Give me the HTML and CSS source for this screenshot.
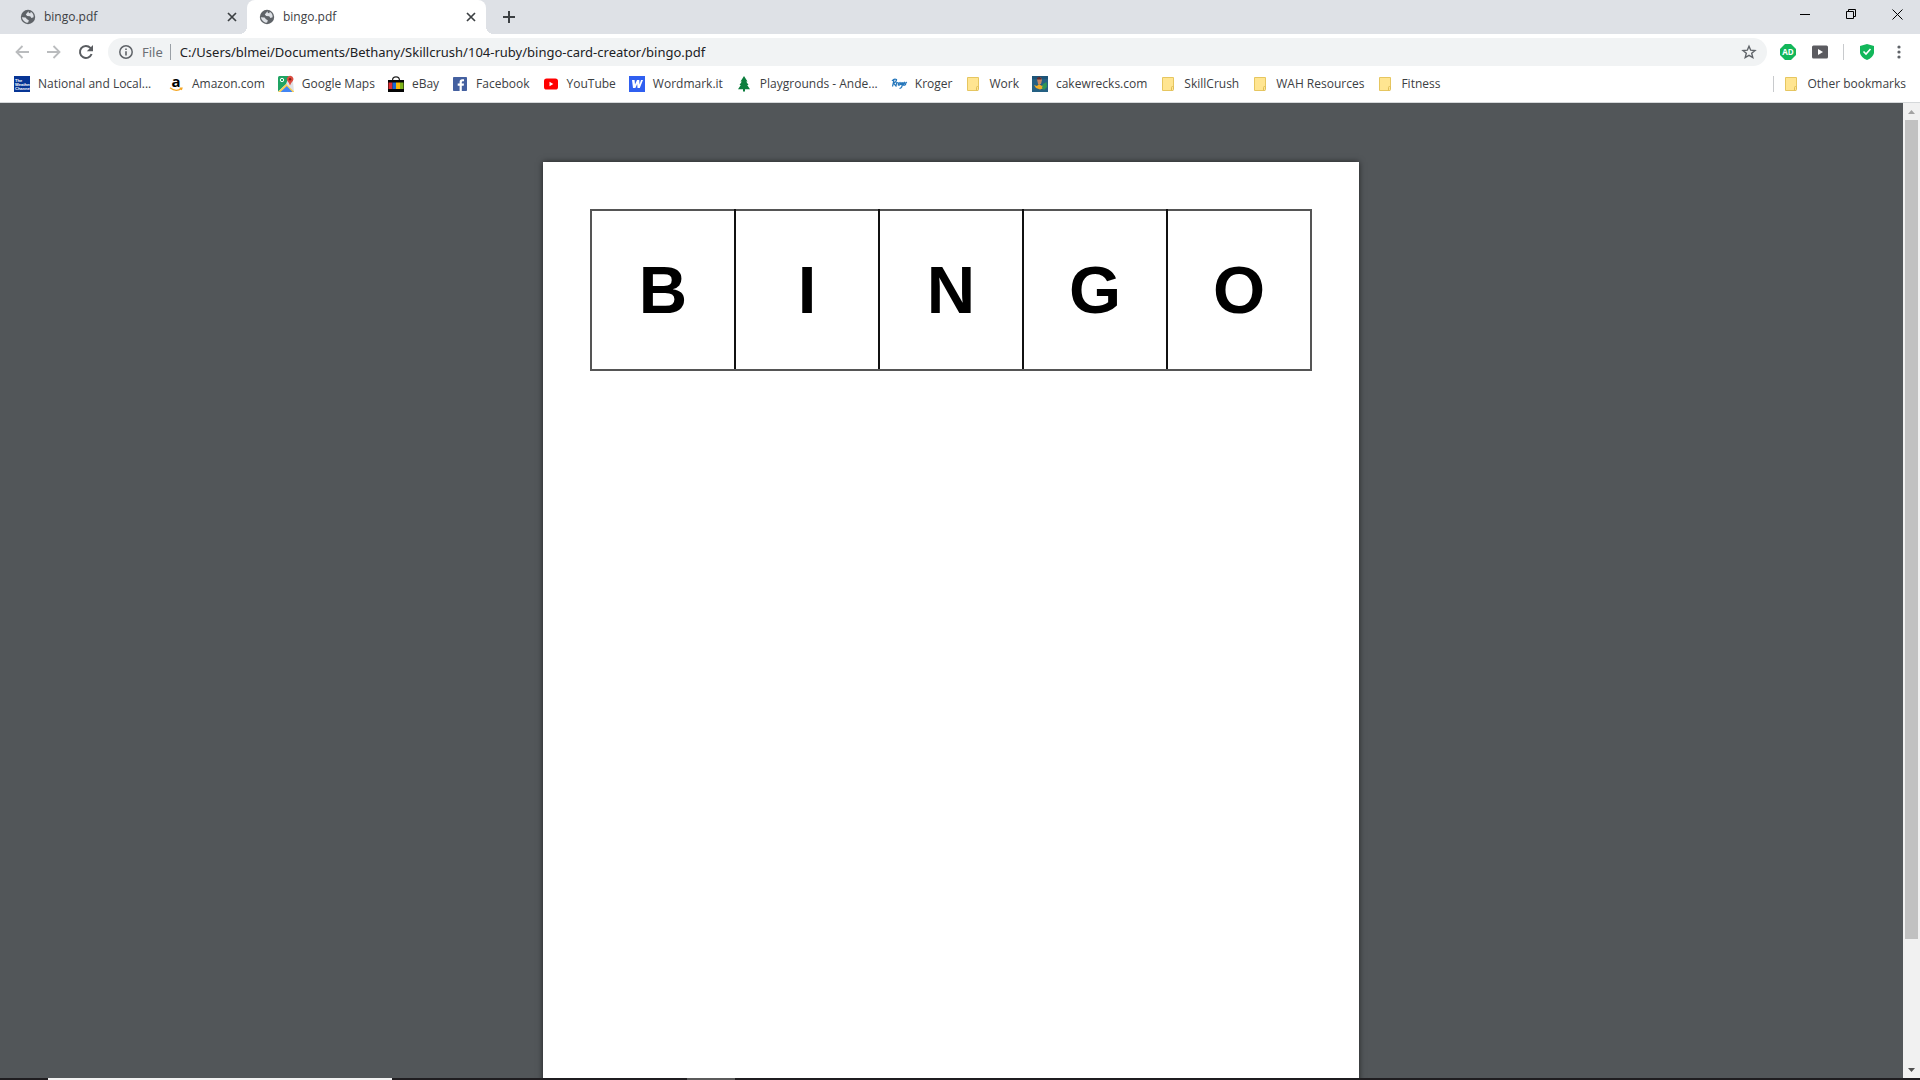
FILE: index.html
```html
<!DOCTYPE html>
<html lang="en">
<head>
<meta charset="utf-8">
<title>bingo.pdf</title>
<link rel="stylesheet" href="styles.css">
</head>
<body>
<svg class="defs" aria-hidden="true">
  <symbol id="globe" viewBox="0 0 16 16"><circle cx="8" cy="8" r="7.2" fill="#5f6368"/><path d="M1.8 8.2 5.6 8.6 7 10.2 8.8 11.2 8.2 13.4 6.8 13.8Q3 12.600 1.800 8.200M8.600 2.200 7 4 5.800 5.400 7.200 7 10.200 7.200 11.400 9 13.600 8.200Q13.900 4.600 10.700 2.800L10.400 4.200 8.800 4.100Z" fill="#dee1e6"/></symbol>
  <symbol id="cross" viewBox="0 0 10 10"><path d="M1 1 9 9M9 1 1 9" fill="none" stroke="#3c4043" stroke-width="1.700"/></symbol>
  <symbol id="folder" viewBox="0 0 16 16"><path d="M2.500 1.500H13.500V11.500H12.500V14.500H2.500Z" fill="#ffe591" stroke="#e6c660"/><path d="M11.500 14.500V11.500Q11.500 10.500 12.500 10.500H13.500V13.500Q13.500 14.500 12.500 14.500Z" fill="#ffe591" stroke="#e0bf58"/></symbol>
</svg>

<header class="browser">
  <div class="tabstrip">
    <div class="tab">
      <svg class="icon"><use href="#globe"/></svg>
      <span class="tab-title">bingo.pdf</span>
      <button class="close" aria-label="Close tab"><svg width="10" height="10"><use href="#cross"/></svg></button>
    </div>
    <div class="tab active">
      <svg class="icon"><use href="#globe"/></svg>
      <span class="tab-title">bingo.pdf</span>
      <button class="close" aria-label="Close tab"><svg width="10" height="10"><use href="#cross"/></svg></button>
    </div>
    <button class="new-tab" aria-label="New tab"><svg width="12" height="12" viewBox="0 0 12 12"><path d="M6 0V12M0 6H12" stroke="#3c4043" stroke-width="2"/></svg></button>
    <div class="window-controls">
      <button aria-label="Minimize"><svg width="10" height="11" viewBox="0 0 10 11"><path d="M0 5.500H10" stroke="#000"/></svg></button>
      <button aria-label="Restore"><svg width="10" height="10" viewBox="0 0 10 10"><path d="M.5 2.500H7.500V9.500H.5ZM2.500 2.500V.5H9.500V7.500H7.500" fill="none" stroke="#000"/></svg></button>
      <button aria-label="Close"><svg width="11" height="11" viewBox="0 0 11 11"><path d="M.5.5 10.500 10.500M10.500.5.5 10.500" stroke="#000"/></svg></button>
    </div>
  </div>

  <div class="toolbar">
    <button class="nav" aria-label="Back"><svg width="14" height="14" viewBox="0 0 14 14"><path d="M14 7H1.500M7.500 1 1.500 7 7.500 13" fill="none" stroke="#babcbe" stroke-width="1.800"/></svg></button>
    <button class="nav" aria-label="Forward"><svg width="14" height="14" viewBox="0 0 14 14"><path d="M0 7H12.500M6.500 1 12.500 7 6.500 13" fill="none" stroke="#babcbe" stroke-width="1.800"/></svg></button>
    <button class="nav" aria-label="Reload"><svg width="14" height="14" viewBox="0 0 14 14"><path d="M12.600 9A6 6 0 1 1 11.400 2.900L12.500 4" fill="none" stroke="#5a5d61" stroke-width="2"/><path d="M14 0V6.200H7.800Z" fill="#5a5d61"/></svg></button>
    <div class="omnibox">
      <svg width="14" height="14" viewBox="0 0 14 14"><circle cx="7" cy="7" r="6.200" fill="none" stroke="#5f6368" stroke-width="1.500"/><path d="M7 6.200V10.400M7 3.500V5" stroke="#5f6368" stroke-width="1.600"/></svg>
      <label class="scheme" for="address">File</label>
      <input id="address" type="text" value="C:/Users/blmei/Documents/Bethany/Skillcrush/104-ruby/bingo-card-creator/bingo.pdf">
      <button class="star" aria-label="Bookmark this page"><svg width="14" height="14" viewBox="0 0 14 14"><path d="M7 1.200 8.700 5.200 13 5.500 9.700 8.300 10.800 12.600 7 10.300 3.200 12.600 4.300 8.300 1 5.500 5.300 5.200Z" fill="none" stroke="#5f6368" stroke-width="1.400"/></svg></button>
    </div>
    <div class="extensions">
      <button aria-label="Ad blocker"><svg width="16" height="16" viewBox="0 0 16 16"><path d="M5 0H11L16 5V11L11 16H5L0 11V5Z" fill="#12b75a"/><text x="8" y="11" text-anchor="middle" class="ad-text">AD</text></svg></button>
      <button aria-label="Video extension"><svg width="16" height="14" viewBox="0 0 16 14"><rect width="16" height="13" y=".5" rx="1.500" fill="#5b5b60"/><path d="M6 4 11 7 6 10Z" fill="#fff"/></svg></button>
      <span class="divider"></span>
      <button aria-label="Security extension"><svg width="16" height="16" viewBox="0 0 16 16"><path d="M8 0 15 2V9Q14 13.500 8 16 2 13.500 1 9V2Z" fill="#12b75a"/><path d="M4.500 7.500 7 10 11.500 5" fill="none" stroke="#fff" stroke-width="1.600"/></svg></button>
      <button aria-label="Menu"><svg width="4" height="14" viewBox="0 0 4 14"><g fill="#5f6368"><circle cx="2" cy="2" r="1.600"/><circle cx="2" cy="7" r="1.600"/><circle cx="2" cy="12" r="1.600"/></g></svg></button>
    </div>
  </div>

  <nav class="bookmarks" aria-label="Bookmarks">
    <a class="truncated" href="#"><svg class="icon" viewBox="0 0 16 16"><rect width="16" height="16" fill="#073595"/><g class="weather-text"><text x="1" y="6">The</text><text x="1" y="10">Weather</text><text x="1" y="14">Channel</text></g></svg>National and Local...</a>
    <a href="#"><svg class="icon" viewBox="0 0 16 16"><text x="8" y="11" text-anchor="middle" class="amazon-text">a</text><path d="M2 11.800Q8 16.500 13.500 12.400M11.500 12H14L13.300 14" fill="none" stroke="#f5a623" stroke-width="1.200"/></svg>Amazon.com</a>
    <a href="#"><svg class="icon" viewBox="0 0 16 16"><path d="M1.500 0H14.500L16 16H0V1.500Z" fill="#dfe1e5"/><path d="M1.500 0H11L8 8 0 15.500V1.500Q0 0 1.500 0" fill="#1fa463"/><path d="M0 16 8.300 8 16 15.500V16H0" fill="#ffd04c"/><path d="M2.500 16 8.800 10 14.500 16Z" fill="#4285f4"/><circle cx="4" cy="4" r="1.700" fill="none" stroke="#fff"/><path d="M12 9.500Q11 6.500 9.500 5A3.200 3.200 0 1 1 14.800 5Q13 6.500 12 9.500" fill="#dd4b3e"/><circle cx="12" cy="3.200" r="1.200" fill="#7d211a"/></svg>Google Maps</a>
    <a href="#"><svg class="icon" viewBox="0 0 16 16"><path d="M4.500 4.500Q4.500.8 8 .8T11.500 4.500" fill="none" stroke="#222" stroke-width="1.200"/><path d="M0 4H16V16H0Z" fill="#050505"/><path d="M.5 6.500H4.500V13H.5Z" fill="#e32d32"/><path d="M4.500 6.500H8V13H4.500Z" fill="#1767d2"/><path d="M8 6.500H12V13H8Z" fill="#f8b90b"/><path d="M12 6.500H15.500V13H12Z" fill="#7fb51b"/></svg>eBay</a>
    <a href="#"><svg class="icon" viewBox="0 0 16 16"><rect x="1" y="1" width="14" height="14" rx=".8" fill="#4460a0"/><path d="M9.800 15V9.700H11.700L12 7.500H9.800V6.200Q9.800 5.200 10.800 5.200H12V3.200H10.200Q7.600 3.200 7.600 5.900V7.500H5.700V9.700H7.600V15Z" fill="#fff"/></svg>Facebook</a>
    <a href="#"><svg class="icon" viewBox="0 0 16 16"><rect x="1" y="2.500" width="14" height="11" rx="2.600" fill="#f00"/><path d="M6.500 5.800 10.300 8 6.500 10.200Z" fill="#fff"/></svg>YouTube</a>
    <a href="#"><svg class="icon" viewBox="0 0 16 16"><rect width="16" height="16" fill="#2f5ff0"/><path d="M3 4H5.600L6 8.500 8 4H10.300L10.500 8.500 12 4H14L10.800 12H8.500L8.200 8 6.400 12H4Z" fill="#fff"/></svg>Wordmark.it</a>
    <a href="#"><svg class="icon" viewBox="0 0 16 16"><path d="M8 0 11.500 5.500H10.200L12.500 9H11.200L14 13.200H9V15.500H7V13.200H2L4.800 9H3.500L5.800 5.500H4.500Z" fill="#0b7d3d"/></svg>Playgrounds - Ande...</a>
    <a href="#"><svg class="icon" viewBox="0 0 16 16"><g fill="none" stroke="#2476bb" stroke-width="1.200"><path d="M1.500 10.500 3 4M1 5Q3 2.300 5.500 3.500 5.500 6 2.500 7.300L5.500 10.500M5 9.500 5.800 6.500 7.500 7M9 6.500Q7 7 7.300 9 8.600 9.700 9 8T9 6.500M11.700 6.500Q9.800 6.500 10 8.500 11.500 9 11.700 6.500 11.500 12 8.500 12.500M12.300 8.200Q14 7.500 13.300 6.300 11.800 7 12.500 9.200 13.500 9.500 14.500 8.500L15 6.500 16 6.200"/></g></svg>Kroger</a>
    <a href="#"><svg class="icon"><use href="#folder"/></svg>Work</a>
    <a href="#"><svg class="icon" viewBox="0 0 16 16"><rect width="16" height="16" fill="#246083"/><path d="M0 0H16V3H0Z" fill="#1d5478"/><path d="M5 3 6 1.500H9L10 4 9 8H6Z" fill="#c98561"/><path d="M5 2 7 .8 9.500 2V3.500H5Z" fill="#592e34"/><path d="M2 9 5 10 7 8 10 10 13 8 12 12 8 13.500 4 12Z" fill="#f0ac27"/><path d="M11 8 14.500 6 15 11 12 14 10 12Z" fill="#309555"/></svg>cakewrecks.com</a>
    <a href="#"><svg class="icon"><use href="#folder"/></svg>SkillCrush</a>
    <a href="#"><svg class="icon"><use href="#folder"/></svg>WAH Resources</a>
    <a href="#"><svg class="icon"><use href="#folder"/></svg>Fitness</a>
    <span class="divider push"></span>
    <a class="other" href="#"><svg class="icon"><use href="#folder"/></svg>Other bookmarks</a>
  </nav>
</header>

<div class="viewer">
  <main class="document">
    <article class="sheet">
      <table class="bingo"><thead><tr><th scope="col">B</th><th scope="col">I</th><th scope="col">N</th><th scope="col">G</th><th scope="col">O</th></tr></thead></table>
    </article>
  </main>
  <div class="scrollbar">
    <button aria-label="Scroll up"><svg width="7" height="4" viewBox="0 0 7 4"><path d="M3.500 0 7 4H0Z" fill="#a3a3a3"/></svg></button>
    <div class="track"><div class="thumb"></div></div>
    <button aria-label="Scroll down"><svg width="7" height="4" viewBox="0 0 7 4"><path d="M0 0H7L3.500 4Z" fill="#505050"/></svg></button>
  </div>
</div>
<footer class="taskbar"><span class="task-search"></span><span class="task-app"></span></footer>
</body>
</html>
```
FILE: styles.css
```css
* { box-sizing: border-box; }

body {
  margin: 0;
  height: 100vh;
  display: flex;
  flex-direction: column;
  overflow: hidden;
  background: #fff;
  color: #3c4043;
  font: 12px/16px "Open Sans", "Noto Sans", sans-serif;
}

button {
  display: flex;
  align-items: center;
  justify-content: center;
  padding: 0;
  border: 0;
  background: none;
  font: inherit;
}

a { color: inherit; text-decoration: none; }
svg { display: block; flex: none; overflow: visible; }
.defs { width: 0; height: 0; position: absolute; }
.icon { width: 16px; height: 16px; }
.divider { width: 1px; height: 16px; background: #c8cacd; }

.browser { flex: none; border-bottom: 1px solid #d5d8da; }

.tabstrip {
  display: flex;
  height: 34px;
  padding-left: 8px;
  background: #dee1e6;
}
.tab {
  display: flex;
  align-items: center;
  gap: 8px;
  width: 239px;
  padding: 0 9px 0 12px;
}
.tab .tab-title { flex: 1; }
.active { position: relative; background: #fff; border-radius: 8px 8px 0 0; }
.active::before,
.active::after {
  content: "";
  position: absolute;
  bottom: 0;
  width: 8px;
  height: 8px;
}
.active::before { right: 100%; background: radial-gradient(circle at 0 0, #dee1e6 8px, #fff 8px); }
.active::after { left: 100%; background: radial-gradient(circle at 100% 0, #dee1e6 8px, #fff 8px); }
.close { width: 12px; height: 16px; }
.new-tab { width: 28px; margin-left: 9px; }
.window-controls { display: flex; height: 28px; margin-left: auto; }
.window-controls button { width: 46px; }

.toolbar {
  display: flex;
  align-items: center;
  height: 36px;
  padding: 0 12px 0 6px;
}
.nav { width: 32px; height: 28px; }
.omnibox {
  display: flex;
  align-items: center;
  flex: 1;
  height: 28px;
  margin-left: 6px;
  padding: 0 11px;
  border-radius: 14px;
  background: #f1f3f4;
  font: 13px/16px "Noto Sans", "Open Sans", sans-serif;
}
.scheme {
  margin-left: 9px;
  padding-right: 7px;
  border-right: 1px solid #9aa0a6;
  color: #6b6f74;
}
#address {
  flex: 1;
  min-width: 0;
  padding: 0 0 0 9px;
  border: 0;
  outline: 0;
  background: none;
  color: #202124;
  font: inherit;
}
.extensions { display: flex; align-items: center; margin-left: 12px; gap: 14px; }
.extensions button { min-width: 18px; height: 20px; }
.ad-text { font: bold 8px "Open Sans", sans-serif; fill: #fff; }

.bookmarks {
  display: flex;
  align-items: center;
  gap: 13px;
  height: 32px;
  padding: 0 14px 4px;
  white-space: nowrap;
}
.bookmarks a { display: flex; align-items: center; gap: 8px; }
.truncated { width: 141px; }
.push { margin-left: auto; }
.other { margin-left: -4px; }
.weather-text { font: bold 4px "Liberation Sans", sans-serif; fill: #fff; }
.amazon-text { font: bold 15px "Open Sans", sans-serif; fill: #000; }

.viewer { flex: 1; display: flex; min-height: 0; }
.document {
  flex: 1;
  overflow: hidden;
  padding: 59px 1px 0 0;
  background: #525659;
}
.sheet {
  width: 816px;
  min-height: 1056px;
  margin: 0 auto;
  padding: 47px;
  background: #fff;
  box-shadow: 0 0 6px rgba(0, 0, 0, .6);
}
.bingo {
  width: 100%;
  table-layout: fixed;
  border-collapse: collapse;
  color: #000;
  font: bold 67px/80px "Liberation Sans", Arial, sans-serif;
}
.bingo th {
  height: 160px;
  padding: 0;
  border: 2px solid #111;
  border-top-color: #555;
  border-bottom-color: #555;
}
.bingo th:first-child { border-left-color: #555; }
.bingo th:last-child { border-right-color: #555; }

.scrollbar {
  display: flex;
  flex-direction: column;
  width: 17px;
  background: #f1f1f1;
}
.scrollbar button { width: 17px; height: 17px; }
.track { flex: 1; padding: 0 2px; }
.thumb { height: 87%; background: #c1c1c1; }

.taskbar { display: flex; flex: none; height: 2px; padding-left: 48px; background: #1f1d20; }
.task-search { width: 344px; background: #f3f3f3; }
.task-app { width: 48px; margin-left: 295px; background: #5b5b5b; }
```
